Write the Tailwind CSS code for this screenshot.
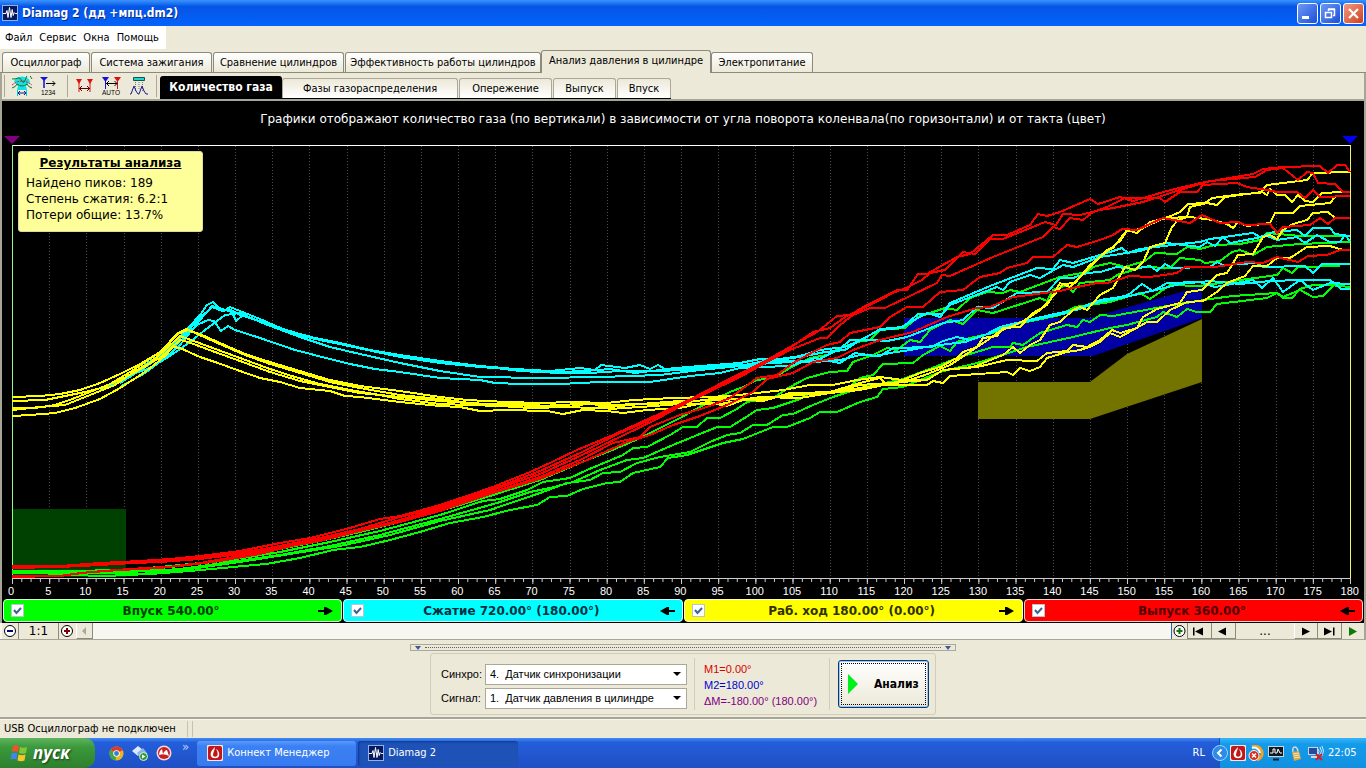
<!DOCTYPE html>
<html lang="ru">
<head>
<meta charset="utf-8">
<title>Diamag 2</title>
<script src="https://cdn.jsdelivr.net/npm/@tailwindcss/browser@4"></script>
</head>
<body class="flex h-screen flex-col overflow-hidden bg-[#ece9d8] font-['DejaVu_Sans_Condensed','DejaVu_Sans',sans-serif] text-[11px] leading-4 text-black">

<!-- Title bar -->
<header class="flex h-[26px] shrink-0 items-center gap-1 bg-linear-to-b from-[#3a93ff] via-[#0555e6] via-25% to-[#0463fb] pr-[2px] pl-0.5">
  <svg class="size-4 shrink-0" viewBox="0 0 16 16"><rect width="16" height="16" fill="#8fb0e8"/><rect x="1" y="1" width="14" height="14" fill="#06185e"/><path d="M1 8.500h3l1-3 1 7 1.500-10 1.500 10 1.200-8 1 6 1-3 1 1h2" fill="none" stroke="#fff"/></svg>
  <h1 class="flex-1 font-['DejaVu_Sans_Condensed',sans-serif] text-[12px] font-bold text-white [text-shadow:1px_1px_#0a2a8c]">Diamag 2 (дд +мпц.dm2)</h1>
  <div class="flex gap-0.5">
    <button aria-label="Свернуть" class="size-[21px] rounded-[3px] border border-white bg-linear-to-br from-[#6f98f5] to-[#1c4cd8]"><svg viewBox="0 0 19 19"><path d="M4 12h7v3H4z" fill="#fff"/></svg></button>
    <button aria-label="Восстановить" class="size-[21px] rounded-[3px] border border-white bg-linear-to-br from-[#6f98f5] to-[#1c4cd8]"><svg viewBox="0 0 19 19"><path d="M7.500 7V5.500h6v6H12M4.500 8.500h6v5h-6zM4 8.500h7M7 5h7" fill="none" stroke="#fff" stroke-width="1.500"/></svg></button>
    <button aria-label="Закрыть" class="size-[21px] rounded-[3px] border border-white bg-linear-to-br from-[#f09a80] to-[#d0391a]"><svg viewBox="0 0 19 19"><path d="M5 5l9 9M14 5l-9 9" stroke="#fff" stroke-width="2.200"/></svg></button>
  </div>
</header>

<!-- Menu -->
<nav class="flex h-[25px] shrink-0">
  <div class="flex h-[23px] w-[166px] items-center gap-[7px] bg-white pl-[5px]">
    <button>Файл</button><button>Сервис</button><button>Окна</button><button>Помощь</button>
  </div>
</nav>

<!-- Main tabs -->
<nav class="flex h-[22px] shrink-0 items-end border-b border-[#8b8a7c] pl-0.5 whitespace-nowrap">
  <button class="h-5 w-[88px] rounded-t-[3px] border border-b-0 border-[#8b8a7c] bg-linear-to-b from-white to-[#ece9d8]">Осциллограф</button>
  <button class="ml-px h-5 w-[121px] rounded-t-[3px] border border-b-0 border-[#8b8a7c] bg-linear-to-b from-white to-[#ece9d8]">Система зажигания</button>
  <button class="ml-px h-5 w-[131px] rounded-t-[3px] border border-b-0 border-[#8b8a7c] bg-linear-to-b from-white to-[#ece9d8]">Сравнение цилиндров</button>
  <button class="ml-px h-5 w-[196px] rounded-t-[3px] border border-b-0 border-[#8b8a7c] bg-linear-to-b from-white to-[#ece9d8]">Эффективность работы цилиндров</button>
  <button class="-mb-px h-[23px] w-[170px] rounded-t-[3px] border border-b-0 border-[#8b8a7c] bg-[#ece9d8] pb-0.5">Анализ давления в цилиндре</button>
  <button class="h-5 w-[102px] rounded-t-[3px] border border-b-0 border-[#8b8a7c] bg-linear-to-b from-white to-[#ece9d8]">Электропитание</button>
</nav>

<!-- Toolbar and chart tabs -->
<div class="flex h-[28px] shrink-0 border-x-2 border-b-2 border-[#a7a596] whitespace-nowrap">
  <div class="my-0.5 ml-0.5 flex items-center border-l border-[#aca899]">
    <button aria-label="Обзор фаз" class="ml-1.5 h-5 w-[22px]"><svg viewBox="0 0 22 20"><path d="M4 3q7-5 14 0l1 3-4 4 1 4H6l1-4-4-4z" fill="#16e0e6"/><path d="M1 3q4 0 6-1t4 3 4-3 6 1" fill="none" stroke="#0a7a28"/><path d="M1 9l3-2q7-4 14 0l3 2" fill="none" stroke="#d02020" stroke-dasharray="2 1"/><path d="M1 12q4-1 5-4 5 4 10 0 1 3 5 4" fill="none" stroke="#0a7a28"/><path d="M6.500 14v6M15.500 14v6" stroke="#0cc"/><path d="M7 17h8M9 15l-2 2 2 2M13 15l2 2-2 2" fill="none" stroke="#0a1c9c"/></svg></button>
    <button aria-label="Нумерация" class="ml-1.5 h-5 w-[22px]"><svg viewBox="0 0 22 20"><path d="M1 1h8L5 5z" fill="#1212d8"/><path d="M5 4v8" stroke="#1212d8" stroke-width="1.500"/><path d="M7 7.500h9M13.500 5l2.500 2.500-2.500 2.500" fill="none" stroke="#000"/><text x="2" y="19" font-family="Liberation Sans" font-size="6.500">1234</text></svg></button>
  </div>
  <div class="my-0.5 ml-1.5 flex items-center border-l border-[#aca899]">
    <button aria-label="Маркеры" class="ml-1.5 h-5 w-[22px]"><svg viewBox="0 0 22 20"><path d="M2 3h6L5 8zM13 3h6l-3 5z" fill="#e01010"/><path d="M5 6v10M16 6v10" stroke="#e01010"/><path d="M5 12.500h11M8 10l-2.500 2.500L8 15M13 10l2.500 2.500L13 15" fill="none" stroke="#600"/></svg></button>
    <button aria-label="Автомаркеры" class="ml-[5px] h-5 w-[22px]"><svg viewBox="0 0 22 20"><path d="M1 1h7L4.500 6z" fill="#1212d8"/><path d="M4.500 5v8" stroke="#1212d8"/><path d="M13 1h7l-3.500 5z" fill="#e01010"/><path d="M16.500 5v8" stroke="#e01010"/><path d="M5 7.500h11M8 5L5.500 7.500 8 10M13.500 5L16 7.500 13.500 10" fill="none" stroke="#000"/><text x="1" y="19" font-family="Liberation Sans" font-size="6.500">AUTO</text></svg></button>
    <button aria-label="Форма сигнала" class="ml-[5px] h-5 w-[22px]"><svg viewBox="0 0 22 20"><path d="M5.500 1.500h11v3h-11z" fill="#1cd6cf" stroke="#14524f"/><path d="M7.500 6v9M14.500 6v9M11 6v7" stroke="#777" stroke-dasharray="1 1"/><path d="M2 18h1l3-8 2 5 2 3h1l3-8 2 5 2 3h2" fill="none" stroke="#1b1b8c"/></svg></button>
    <span class="ml-1.5 h-[22px] border-l border-[#aca899]"></span>
  </div>
  <nav class="mt-[3px] ml-[3px] flex flex-1 items-end">
    <div class="flex items-end border-b border-black">
      <button class="h-[22px] w-[122px] rounded-t-[3px] bg-black text-[12px] font-bold text-white">Количество газа</button>
      <button class="h-5 w-[176px] rounded-t-[3px] border border-b-0 border-[#aca899] bg-linear-to-b from-[#ece9d8] to-white">Фазы газораспределения</button>
      <button class="ml-px h-5 w-[93px] rounded-t-[3px] border border-b-0 border-[#aca899] bg-linear-to-b from-[#ece9d8] to-white">Опережение</button>
      <button class="ml-px h-5 w-[63px] rounded-t-[3px] border border-b-0 border-[#aca899] bg-linear-to-b from-[#ece9d8] to-white">Выпуск</button>
      <button class="ml-px h-5 w-[54px] rounded-t-[3px] border border-b-0 border-[#aca899] bg-linear-to-b from-[#ece9d8] to-white">Впуск</button>
    </div>
  </nav>
</div>

<!-- Chart -->
<main class="relative flex min-h-0 flex-1 flex-col border-x-2 border-[#a7a596] bg-black font-['DejaVu_Sans',sans-serif] text-white">
  <p class="flex h-[35px] shrink-0 items-center justify-center text-[12px]">Графики отображают количество газа (по вертикали) в зависимости от угла поворота коленвала(по горизонтали) и от такта (цвет)</p>
  <svg class="min-h-0 w-full flex-1" viewBox="2 136 1362 448" preserveAspectRatio="none" role="img" aria-label="Количество газа по углу поворота коленвала">
    <path d="M4 136h16l-8 8z" fill="#80007f"/><path d="M1342 136h16l-8 8z" fill="#0000f5"/>
    <path d="M49.500 146V578M86.500 146V578M124.500 146V578M161.500 146V578M198.500 146V578M235.500 146V578M272.500 146V578M309.500 146V578M347.500 146V578M384.500 146V578M421.500 146V578M458.500 146V578M495.500 146V578M532.500 146V578M570.500 146V578M607.500 146V578M644.500 146V578M681.500 146V578M718.500 146V578M755.500 146V578M793.500 146V578M830.500 146V578M867.500 146V578M904.500 146V578M941.500 146V578M978.500 146V578M1016.500 146V578M1053.500 146V578M1090.500 146V578M1127.500 146V578M1164.500 146V578M1201.500 146V578M1239.500 146V578M1276.500 146V578M1313.500 146V578" stroke="#4c4c4c" stroke-dasharray="1 2"/>
    <path d="M13 509h113v68H13z" fill="#004000"/>
    <path d="M904 318H1090L1202 286V318L1093 356H904z" fill="#0000a4"/>
    <path d="M978 382H1090L1127 354 1202 319V382L1090 419H978z" fill="#737300"/>
    <path d="M12 145.500H1350" stroke="#fff"/><path d="M12.500 145V578" stroke="#90f890"/><path d="M1350.500 145V578" stroke="#f4f45c"/>
    <path d="M12 578.500H1351" stroke="#ccc"/>
    <path d="M12 580.500H1351" stroke="#ccc" stroke-width="3" stroke-dasharray="1 8.292"/>
    <path d="M12 581.500H1351" stroke="#ccc" stroke-width="5" stroke-dasharray="1 36.167"/>
    <g fill="none" stroke-width="2" stroke-linejoin="round" shape-rendering="crispEdges">
      <g stroke="#00ff00">
        <path d="M12 571L70 571 120 570 160 567 200 563 240 556 280 549 320 541 360 532 400 522 440 511 490 496 540 480 580 463 627 444 650 433 680 418 707 403 730 392 743 387 757 380 773 378 790 368 810 358 827 355 840 348 857 342 870 340 880 330 905 328 918 317 945 308 957 310 970 298 987 292 1003 293 1010 290 1020 292 1060 277 1087 272 1093 267 1110 263 1125 267 1145 261 1155 253 1177 254 1187 247 1200 249 1215 245 1240 244 1260 240 1267 233 1300 236 1350 236"/>
        <path d="M12 571L80 572 130 571 180 566 230 560 280 552 330 542 380 531 440 515 483 501 500 499 527 490 543 482 570 478 587 470 623 455 633 448 647 447 670 435 683 427 697 427 707 418 720 418 737 409 747 402 773 398 790 387 807 378 830 372 847 371 853 362 873 355 887 348 897 350 910 340 920 342 930 330 950 320 963 324 977 310 993 313 1040 298 1047 301 1053 290 1067 285 1073 292 1080 283 1110 280 1117 275 1143 267 1170 268 1180 258 1200 260 1205 263 1220 261 1232 252 1240 250 1253 255 1267 247 1300 244 1350 242"/>
        <path d="M12 572L80 573 130 572 180 569 230 562 280 555 330 546 380 535 440 519 497 503 530 492 550 488 573 482 600 470 627 460 643 458 673 445 717 427 730 427 743 419 757 410 773 408 800 399 810 393 833 393 850 387 860 378 873 375 883 364 913 363 923 355 940 346 950 351 957 342 970 338 993 333 1010 325 1027 322 1060 315 1075 307 1110 302 1120 299 1140 293 1150 299 1160 292 1170 285 1200 286 1233 281 1277 275 1283 268 1292 273 1298 267 1340 266"/>
        <path d="M12 573L90 573 140 574 190 569 240 562 290 554 340 546 390 535 440 521 490 510 540 493 567 483 590 480 603 473 620 472 637 463 660 457 690 452 710 442 727 435 740 433 753 425 767 425 783 415 793 414 813 405 833 397 860 388 900 380 927 370 960 357 993 347 1010 347 1013 343 1023 345 1040 333 1067 325 1077 327 1083 320 1090 322 1100 315 1113 316 1167 306 1210 299 1233 296 1277 293 1283 298 1292 298 1300 289 1313 285 1330 285 1350 287"/>
        <path d="M12 571L40 573 70 575 105 576 150 574 190 571 233 567 266 564 300 558 333 550 360 547 390 540 420 532 450 523 483 517 510 510 537 505 550 497 567 496 583 489 607 483 620 482 633 473 660 467 668 458 687 455 723 443 743 439 773 427 787 427 810 418 820 412 837 412 860 402 877 397 883 389 903 387 940 372 977 363 1027 347 1073 337 1110 328 1127 325 1157 317 1163 312 1177 317 1187 309 1197 312 1210 312 1217 304 1267 298 1277 293 1283 297 1300 290 1313 297 1323 296 1335 284 1350 284"/>
      </g>
      <g stroke="#00ffff">
        <path d="M100 390L130 375 160 355 175 343 188 328 200 315 207 305 213 302 217 306 224 311 230 307 240 311 260 319 285 330 310 337 340 343 370 350 400 355 440 361 480 366 515 369 550 371 580 368 595 370 601 365 625 368 640 365 650 369 658 365 665 369 700 366 740 363 760 359 780 359 800 356 820 350 845 347 865 338 880 329 903 327 918 314 942 314 950 303 990 286 1037 268 1053 269 1060 260 1073 263 1110 252 1122 248 1128 253 1140 249 1180 244 1200 242 1210 239 1253 233 1260 237 1273 232 1297 230 1305 236 1313 228 1330 228 1335 234 1350 236"/>
        <path d="M110 387L140 369 165 352 185 334 200 318 212 307 222 311 229 309 240 315 265 323 290 333 320 340 350 346 400 357 440 363 480 367 520 370 560 372 585 371 610 369 635 373 660 370 700 368 730 365 755 366 785 359 800 357 825 352 845 350 860 340 880 330 900 328 927 313 940 317 950 305 997 287 1003 290 1010 282 1030 275 1040 278 1063 265 1073 267 1100 257 1140 251 1167 243 1175 244 1200 247 1207 242 1215 246 1223 237 1230 243 1267 236 1277 240 1297 237 1305 243 1317 235 1330 242 1340 242 1345 235 1350 241"/>
        <path d="M120 387L145 373 165 358 180 345 200 320 212 306 232 312 236 321 243 315 270 325 300 334 330 342 400 357 440 361 480 366 520 371 560 373 590 373 620 371 660 371 700 369 740 366 770 363 795 362 815 361 840 349 850 340 873 340 887 341 907 337 943 323 963 320 977 307 993 308 1017 293 1047 292 1060 278 1073 278 1087 273 1100 272 1117 267 1133 269 1150 266 1157 271 1165 264 1172 268 1210 267 1217 262 1223 265 1257 263 1263 267 1305 266 1313 273 1322 264 1350 264"/>
        <path d="M130 375L150 368 170 356 190 342 205 330 225 315 240 313 265 324 300 337 330 347 360 354 400 363 440 371 480 377 540 378 600 377 660 375 700 370 740 366 765 361 790 361 815 362 840 360 860 355 880 356 893 348 932 347 943 341 957 337 970 340 993 332 1017 323 1047 317 1067 313 1087 305 1100 300 1120 297 1128 295 1142 284 1153 291 1167 283 1200 282 1215 287 1253 280 1262 288 1273 278 1283 292 1300 280 1313 290 1330 283 1350 284"/>
        <path d="M120 383L150 364 170 350 185 337 197 325 208 320 214 321 221 331 228 326 235 330 260 338 295 350 330 359 350 364 375 369 400 372 440 378 480 380 495 383 520 384 560 384 600 382 650 382 690 376 720 373 740 368 760 367 790 366 815 358 840 363 855 353 875 356 890 353 910 350 925 347 940 345 965 342 985 335 1000 327 1025 321 1050 315 1080 309 1095 303 1130 296 1160 289 1180 284 1210 281 1240 284 1270 281 1300 280 1330 280 1337 285 1341 289 1350 289"/>
      </g>
      <g stroke="#ffff00">
        <path d="M12 397L40 396 60 394 80 390 100 383 120 374 140 364 160 352 178 333 186 329 202 335 220 343 245 354 270 362 300 371 330 380 360 386 400 391 440 397 467 400 507 402 540 403 573 402 607 403 633 400 673 398 707 397 730 396 757 393 783 390 810 385 833 385 857 380 880 377 903 380 920 373 940 367 957 358 963 352 977 347 983 338 997 336 1003 328 1020 327 1033 313 1047 305 1060 283 1070 287 1090 267 1107 250 1113 248 1127 230 1137 233 1150 222 1167 218 1190 217 1213 220 1227 224 1233 228 1238 222 1247 226 1270 223 1275 213 1293 213 1300 206 1330 203 1335 197"/>
        <path d="M12 401L45 400 65 396 85 392 105 387 135 369 160 352 178 334 188 330 204 337 222 345 245 355 270 364 300 373 330 382 360 388 400 395 440 399 470 403 507 405 540 406 580 404 610 405 640 404 680 401 720 400 760 398 800 395 840 391 860 388 880 385 903 382 925 375 950 365 965 355 985 342 1000 331 1015 325 1025 320 1040 310 1050 300 1063 284 1075 283 1090 265 1110 249 1120 241 1127 231 1140 229 1160 220 1173 215 1180 212 1188 204 1205 203 1212 198 1243 194 1260 193 1267 185 1307 180 1313 173 1350 172"/>
        <path d="M12 408L35 408 55 405 75 398 100 388 120 380 145 367 165 350 180 336 210 347 240 358 270 369 295 377 320 384 350 390 380 395 400 399 440 404 470 405 500 406 530 408 570 407 590 403 610 409 640 407 680 404 720 404 760 397 800 398 830 393 860 385 890 383 927 380 943 370 973 367 1003 355 1013 347 1020 353 1030 345 1040 340 1050 325 1060 322 1073 310 1080 307 1087 310 1100 295 1113 288 1125 267 1135 270 1143 262 1150 247 1165 243 1172 227 1178 220 1187 217 1190 207 1207 203 1217 205 1225 197 1262 192 1267 195 1270 189 1277 195 1285 195 1292 202 1298 195 1305 201 1313 202 1322 193 1342 192"/>
        <path d="M12 410L40 407 65 405 90 395 115 385 135 371 160 358 180 340 188 342 215 352 240 361 270 372 300 381 330 387 360 393 400 397 440 401 480 404 520 404 560 407 600 408 640 404 680 403 720 398 763 401 790 393 820 394 860 390 893 383 903 380 927 380 943 370 977 367 1007 360 1037 361 1047 353 1067 351 1073 345 1087 347 1100 340 1112 330 1120 333 1137 328 1143 317 1157 309 1180 303 1187 292 1202 290 1217 275 1227 273 1238 255 1253 254 1263 237 1270 235 1277 239 1283 230 1293 224 1307 220 1313 213 1328 212 1335 218"/>
        <path d="M12 416L30 415 55 413 75 408 100 399 120 388 145 372 165 356 173 347 180 348 200 357 215 362 240 371 260 378 280 382 300 388 330 391 345 396 360 397 400 402 440 406 460 407 480 411 507 410 547 411 563 414 583 410 607 411 623 413 647 410 680 408 707 402 727 406 743 400 763 399 800 393 830 392 860 383 880 378 887 385 927 385 933 381 943 383 950 376 1007 372 1013 375 1020 368 1030 371 1040 367 1047 358 1067 352 1080 350 1090 347 1100 342 1110 333 1120 337 1133 330 1147 322 1157 322 1170 310 1187 302 1203 301 1217 292 1227 283 1245 276 1253 266 1267 266 1277 258 1290 258 1307 247 1330 246 1343 250"/>
      </g>
      <g stroke="#ff0000">
        <path d="M12 566L60 566 100 563 140 561 170 559 200 556 240 551 280 543 310 538 350 528 380 519 400 516 440 505 490 488 530 472 550 463 577 450 613 435 657 415 693 398 733 377 767 360 790 347 817 332 837 316 850 315 867 305 897 290 907 290 918 274 927 274 957 257 970 254 993 235 1007 235 1030 225 1038 214 1047 216 1060 212 1090 199 1098 204 1120 197 1133 201 1167 191 1200 183 1253 174 1263 169 1283 167 1320 166 1328 173 1337 165 1345 165 1350 172"/>
        <path d="M12 568L60 567 100 565 150 562 200 558 240 553 280 546 320 538 360 529 400 517 440 507 490 490 540 471 580 453 620 433 657 417 700 395 740 375 767 360 790 348 803 339 813 332 830 328 845 317 870 305 895 292 906 288 922 280 930 273 945 270 963 252 975 254 990 239 1003 239 1045 222 1056 225 1063 214 1080 215 1100 210 1113 208 1143 202 1180 190 1210 181 1255 177 1267 170 1283 168 1298 180 1307 172 1313 173 1318 183 1335 184 1343 192 1350 192"/>
        <path d="M12 576L60 576 80 573 120 570 160 568 200 563 240 556 280 548 320 541 360 531 400 520 440 508 490 491 540 474 580 456 620 437 657 419 690 401 740 377 767 362 790 350 820 338 827 338 840 325 853 315 870 308 885 308 937 283 942 275 950 276 993 257 1043 237 1053 227 1060 229 1070 218 1083 220 1093 212 1107 207 1125 198 1160 198 1165 202 1180 192 1197 192 1203 185 1237 183 1247 187 1267 190 1277 192 1297 192 1305 198 1313 190 1320 197 1350 196"/>
        <path d="M12 577L60 576 90 572 130 569 180 566 220 561 260 554 300 544 350 532 400 521 440 510 490 493 540 477 580 460 613 443 640 437 650 427 680 415 707 407 730 398 757 378 777 375 793 363 813 352 827 345 840 342 850 333 880 327 890 317 907 307 923 307 940 292 963 290 980 277 1000 273 1007 268 1027 263 1033 257 1053 257 1067 245 1077 247 1100 240 1113 235 1122 229 1137 230 1163 218 1190 223 1202 215 1220 223 1238 222 1245 225 1270 224 1277 233 1283 227 1310 225 1320 218 1328 224 1335 218 1350 218"/>
        <path d="M12 567L60 566 110 564 160 562 200 559 250 553 300 543 350 533 400 522 440 511 490 494 540 479 562 470 585 461 627 442 650 435 673 425 700 416 727 405 753 392 767 379 793 373 813 362 837 358 853 350 880 340 913 332 947 317 977 308 990 307 1013 297 1060 291 1077 287 1097 283 1107 283 1130 276 1150 277 1177 273 1185 267 1215 267 1247 262 1263 263 1277 257 1298 262 1308 256 1327 255 1340 250 1350 250"/>
      </g>
    </g>
  </svg>
  <div class="mr-[14px] ml-[9px] flex h-[15px] shrink-0 justify-between font-['Liberation_Sans',sans-serif] text-[11px] leading-[15px]">
    <span class="flex w-0 justify-center">0</span><span class="flex w-0 justify-center">5</span><span class="flex w-0 justify-center">10</span><span class="flex w-0 justify-center">15</span><span class="flex w-0 justify-center">20</span><span class="flex w-0 justify-center">25</span><span class="flex w-0 justify-center">30</span><span class="flex w-0 justify-center">35</span><span class="flex w-0 justify-center">40</span><span class="flex w-0 justify-center">45</span><span class="flex w-0 justify-center">50</span><span class="flex w-0 justify-center">55</span><span class="flex w-0 justify-center">60</span><span class="flex w-0 justify-center">65</span><span class="flex w-0 justify-center">70</span><span class="flex w-0 justify-center">75</span><span class="flex w-0 justify-center">80</span><span class="flex w-0 justify-center">85</span><span class="flex w-0 justify-center">90</span><span class="flex w-0 justify-center">95</span><span class="flex w-0 justify-center">100</span><span class="flex w-0 justify-center">105</span><span class="flex w-0 justify-center">110</span><span class="flex w-0 justify-center">115</span><span class="flex w-0 justify-center">120</span><span class="flex w-0 justify-center">125</span><span class="flex w-0 justify-center">130</span><span class="flex w-0 justify-center">135</span><span class="flex w-0 justify-center">140</span><span class="flex w-0 justify-center">145</span><span class="flex w-0 justify-center">150</span><span class="flex w-0 justify-center">155</span><span class="flex w-0 justify-center">160</span><span class="flex w-0 justify-center">165</span><span class="flex w-0 justify-center">170</span><span class="flex w-0 justify-center">175</span><span class="flex w-0 justify-center">180</span>
  </div>
  <aside class="absolute top-[50px] left-4 h-[81px] w-[185px] rounded-[3px] border border-[#dcdc9c] bg-[#ffff99] px-[7px] pt-[3px] text-[12px] leading-4 text-black">
    <h2 class="mb-1 text-center font-bold underline">Результаты анализа</h2>
    <p>Найдено пиков: 189</p><p>Степень сжатия: 6.2:1</p><p>Потери общие: 13.7%</p>
  </aside>
</main>

<!-- Stroke legend -->
<div class="grid h-6 shrink-0 grid-cols-4 gap-px border-x-2 border-[#a7a596] bg-black pr-px pb-px pl-px font-['DejaVu_Sans',sans-serif] text-[12px] font-bold">
  <label class="flex items-center rounded-[4px] border border-[#d8ffd8] bg-[#00ff00] px-[7px]"><span class="grid size-[13px]"><input type="checkbox" checked class="col-start-1 row-start-1 size-[13px] appearance-none border border-[#b8c4d4] bg-white"><svg class="pointer-events-none col-start-1 row-start-1" viewBox="0 0 13 13"><path d="M3 6l2.500 3L10 4" fill="none" stroke="#3d6298" stroke-width="2"/></svg></span><span class="flex-1 text-center text-[#003c00]">Впуск 540.00°</span><svg class="h-2.5 w-4" viewBox="0 0 16 10"><path d="M0 4h6V1h2l7 4-7 4H6V6H0z"/></svg></label>
  <label class="flex items-center rounded-[4px] border border-[#d8ffff] bg-[#00ffff] px-[7px]"><span class="grid size-[13px]"><input type="checkbox" checked class="col-start-1 row-start-1 size-[13px] appearance-none border border-[#b8c4d4] bg-white"><svg class="pointer-events-none col-start-1 row-start-1" viewBox="0 0 13 13"><path d="M3 6l2.500 3L10 4" fill="none" stroke="#3d6298" stroke-width="2"/></svg></span><span class="flex-1 text-center text-[#003040]">Сжатие 720.00° (180.00°)</span><svg class="h-2.5 w-4" viewBox="0 0 16 10"><path d="M16 4h-6V1H8L1 5l7 4h2V6h6z"/></svg></label>
  <label class="flex items-center rounded-[4px] border border-[#ffffd0] bg-[#ffff00] px-[7px]"><span class="grid size-[13px]"><input type="checkbox" checked class="col-start-1 row-start-1 size-[13px] appearance-none border border-[#b8c4d4] bg-white"><svg class="pointer-events-none col-start-1 row-start-1" viewBox="0 0 13 13"><path d="M3 6l2.500 3L10 4" fill="none" stroke="#3d6298" stroke-width="2"/></svg></span><span class="flex-1 text-center text-[#303000]">Раб. ход 180.00° (0.00°)</span><svg class="h-2.5 w-4" viewBox="0 0 16 10"><path d="M0 4h6V1h2l7 4-7 4H6V6H0z"/></svg></label>
  <label class="flex items-center rounded-[4px] border border-[#ffd0d0] bg-[#ff0000] px-[7px]"><span class="grid size-[13px]"><input type="checkbox" checked class="col-start-1 row-start-1 size-[13px] appearance-none border border-[#b8c4d4] bg-white"><svg class="pointer-events-none col-start-1 row-start-1" viewBox="0 0 13 13"><path d="M3 6l2.500 3L10 4" fill="none" stroke="#3d6298" stroke-width="2"/></svg></span><span class="flex-1 text-center text-[#500000]">Выпуск 360.00°</span><svg class="h-2.5 w-4" viewBox="0 0 16 10"><path d="M16 4h-6V1H8L1 5l7 4h2V6h6z"/></svg></label>
</div>

<!-- Zoom and playback row -->
<div class="flex h-[17px] shrink-0 border-r-2 border-b border-[#a7a596] bg-[#f7f6f0] pl-0.5">
  <button aria-label="Уменьшить" class="w-[17px] border-r border-[#8b8a7c] bg-[#ece9d8]"><svg class="h-4 w-4" viewBox="0 0 16 16"><circle cx="8" cy="8" r="5.500" fill="#fff" stroke="#000"/><path d="M5 8h6" stroke="#00007a" stroke-width="2"/></svg></button>
  <button class="w-10 border-r border-[#8b8a7c] bg-[#ece9d8] font-['DejaVu_Sans',sans-serif] text-[12px]">1:1</button>
  <button aria-label="Увеличить" class="w-[17px] bg-[#ece9d8]"><svg class="h-4 w-4" viewBox="0 0 16 16"><circle cx="8" cy="8" r="5.500" fill="#fff" stroke="#000"/><path d="M5 8h6M8 5v6" stroke="#7a0000" stroke-width="2"/></svg></button>
  <button aria-label="Влево" class="w-[17px] border-r border-b border-l border-[#8b8a7c] border-l-white bg-[#ece9d8]"><svg class="h-4 w-4" viewBox="0 0 16 16"><path d="M9 4v8L5 8z" fill="#aca899"/></svg></button>
  <div class="flex-1"></div>
  <button aria-label="Добавить" class="w-[17px] border-r border-l border-r-[#8b8a7c] border-l-[#2866b8] bg-[#ece9d8]"><svg class="h-4 w-4" viewBox="0 0 16 16"><circle cx="7.500" cy="8" r="5.500" fill="#fff" stroke="#000"/><path d="M4.500 8h6M7.500 5v6" stroke="#0a7a0a" stroke-width="2"/></svg></button>
  <button aria-label="В начало" class="w-6 border-r border-b border-[#8b8a7c] bg-[#ece9d8]"><svg class="h-4 w-[22px]" viewBox="0 0 22 16"><path d="M5 4.500h1.500v8H5zM15 4.500v8L7 8.500z"/></svg></button>
  <button aria-label="Назад" class="w-6 border-r border-b border-[#8b8a7c] bg-[#ece9d8]"><svg class="h-4 w-[22px]" viewBox="0 0 22 16"><path d="M14 4.500v8L6 8.500z"/></svg></button>
  <button class="w-[58px] bg-[#ece9d8] font-['DejaVu_Sans',sans-serif] text-[12px]">...</button>
  <button aria-label="Вперёд" class="w-6 border-r border-b border-l border-[#8b8a7c] border-l-white bg-[#ece9d8]"><svg class="h-4 w-[22px]" viewBox="0 0 22 16"><path d="M7 4.500v8l8-4z"/></svg></button>
  <button aria-label="В конец" class="w-6 border-r border-b border-[#8b8a7c] bg-[#ece9d8]"><svg class="h-4 w-[22px]" viewBox="0 0 22 16"><path d="M15 4.500h1.500v8H15zM6 4.500v8l8-4z"/></svg></button>
  <button aria-label="Воспроизвести" class="w-[22px] bg-[#ece9d8]"><svg class="h-4 w-[22px]" viewBox="0 0 22 16"><path d="M7 4v9l8-4.500z" fill="#0a7a0a"/></svg></button>
</div>

<!-- Controls -->
<section class="flex h-[79px] shrink-0 flex-col items-center border-b-2 border-[#a7a596] pt-1 font-['Liberation_Sans',sans-serif] text-[11px]">
  <div class="flex h-[7px] w-[546px] items-center gap-1 border border-[#aca899] px-1">
    <svg class="h-1 w-1.5" viewBox="0 0 6 4"><path d="M0 0h6L3 4z" fill="#3a5a9c"/></svg><span class="flex-1 border-t border-dotted border-[#55606c]"></span><svg class="h-1 w-1.5" viewBox="0 0 6 4"><path d="M0 0h6L3 4z" fill="#3a5a9c"/></svg>
  </div>
  <div class="mt-0.5 flex h-[62px] w-[506px] items-center rounded-[3px] border border-[#d0cdbb] pl-2.5">
    <div class="mt-1 grid w-[246px] grid-cols-[44px_202px] items-center gap-y-[3px]">
      <label for="sync">Синхро:</label>
      <span class="grid"><select id="sync" class="col-start-1 row-start-1 h-[21px] appearance-none border border-[#aca899] bg-white pl-1"><option>4.&nbsp; Датчик синхронизации</option></select><svg class="pointer-events-none col-start-1 row-start-1 mr-1.5 h-1 w-2 self-center justify-self-end" viewBox="0 0 8 4"><path d="M0 0h8L4 4z"/></svg></span>
      <label for="signal">Сигнал:</label>
      <span class="grid"><select id="signal" class="col-start-1 row-start-1 h-[21px] appearance-none border border-[#aca899] bg-white pl-1"><option>1.&nbsp; Датчик давления в цилиндре</option></select><svg class="pointer-events-none col-start-1 row-start-1 mr-1.5 h-1 w-2 self-center justify-self-end" viewBox="0 0 8 4"><path d="M0 0h8L4 4z"/></svg></span>
    </div>
    <div class="ml-[7px] h-[52px] w-[136px] border-x border-[#d0cdbb] pt-[3px] pl-[9px] whitespace-nowrap">
      <p class="text-[#d80000]">M1=0.00°</p><p class="text-[#0000d0]">M2=180.00°</p><p class="text-[#80007f]">ΔM=-180.00° (180.00°)</p>
    </div>
    <button class="ml-2 flex h-12 w-[91px] items-center rounded-[3px] border border-[#003c74] bg-linear-to-b from-white to-[#ece9d8] p-0.5 shadow-[inset_0_0_0_1px_#a9c4ec]"><span class="flex size-full items-center gap-4 border border-dotted border-black pl-1.5 font-['DejaVu_Sans_Condensed',sans-serif] text-[12px] font-bold"><svg class="h-5 w-2.5" viewBox="0 0 10 20"><path d="M0 0l10 10L0 20z" fill="#00f01c"/></svg>Анализ</span></button>
  </div>
</section>

<!-- Status bar -->
<footer class="flex h-[19px] shrink-0 items-center border-t border-[#f8f7f0]">
  <p class="w-[188px] border-r border-[#c5c2b0] pl-1">USB Осциллограф не подключен</p><span class="ml-1 h-4 border-l border-[#c5c2b0]"></span>
</footer>

<!-- Taskbar -->
<div class="flex h-[30px] shrink-0 items-stretch bg-linear-to-b from-[#3f8cf3] via-[#245edb] via-15% to-[#1f4fc4] text-white">
  <button class="flex w-[95px] items-center gap-1 rounded-r-[10px] bg-linear-to-b from-[#5fb45f] via-[#3b9a3b] via-30% to-[#2d7f2d] pl-2.5 font-['Open_Sans',sans-serif] text-[17px] font-bold italic [text-shadow:1px_1px_2px_#143c14]">
    <svg class="h-[18px] w-[19px]" viewBox="0 0 19 18"><path d="M3 2q3-2 6 0L8 8Q5 6.500 2 8z" fill="#f0532a"/><path d="M10 3q4 1.500 7 0l-1 6q-3 1.500-7 0z" fill="#82c836"/><path d="M1.500 9.500q3-1.500 6 0l-1 6q-3-1.500-6 0z" fill="#3f86f2"/><path d="M8.500 10.500q4 1.500 7 0l-1 6q-3 1.500-7 0z" fill="#fbc52c"/></svg>пуск</button>
  <div class="ml-3.5 flex items-center gap-2">
    <button aria-label="Chrome"><svg class="size-[15px]" viewBox="0 0 16 16"><circle cx="8" cy="8" r="7.500" fill="#e8b820"/><path d="M8 8L1.500 4.200A7.500 7.500 0 0 1 14.500 4.500z" fill="#db3b2b"/><path d="M8 8L1.500 4.200A7.500 7.500 0 0 0 7 15.500z" fill="#3da64a"/><circle cx="8" cy="8" r="3.500" fill="#fff"/><circle cx="8" cy="8" r="2.600" fill="#3b79d8"/></svg></button>
    <button aria-label="Медиа"><svg class="size-4" viewBox="0 0 16 16"><path d="M0 6l6-5 5 4-5 6z" fill="#dceafc"/><path d="M5 8l6-5 4 5-5 6z" fill="#86b4ec"/><circle cx="11.500" cy="11.500" r="4" fill="#2f9a38" stroke="#d8f0d8"/><path d="M10 9.500v4l3.500-2z" fill="#fff"/></svg></button>
    <button aria-label="Nero"><svg class="size-4" viewBox="0 0 16 16"><circle cx="8" cy="8" r="7.500" fill="#f6dada"/><circle cx="8" cy="8" r="6" fill="#c82020"/><path d="M3 10q0-4 3-6l1 5q2-4 4-4l2 6q-5-3-10-1z" fill="#fff"/></svg></button>
    <button class="ml-0.5 mb-3 text-[13px] leading-3 text-[#b8d0ff]">»</button>
  </div>
  <div class="ml-2 flex items-center gap-0.5">
    <button class="flex h-[25px] w-[159px] items-center gap-1 rounded-[3px] bg-linear-to-b from-[#5a9bff] via-[#3c81f3] via-20% to-[#377af0] pl-2.5"><svg class="size-4" viewBox="0 0 16 16"><rect width="16" height="16" rx="1" fill="#f4e4e4"/><rect x="1" y="1" width="14" height="14" rx="2" fill="#c01818"/><path d="M8 2C4 6 3 8 4 11c1 3 7 3 8 0 1-3-1-6-3-7 2 3 2 6 1 7-1 1-4 1-4-1 0-3 2-5 2-8z" fill="#fff"/></svg>Коннект Менеджер</button>
    <button class="flex h-[25px] w-[160px] items-center gap-1 rounded-[3px] bg-[#1e52b7] pl-2.5 shadow-[inset_1px_1px_2px_#123a8c]"><svg class="size-4" viewBox="0 0 16 16"><rect width="16" height="16" fill="#8fb0e8"/><rect x="1" y="1" width="14" height="14" fill="#06185e"/><path d="M1 8.500h3l1-3 1 7 1.500-10 1.500 10 1.200-8 1 6 1-3 1 1h2" fill="none" stroke="#fff"/></svg>Diamag 2</button>
  </div>
  <div class="flex flex-1 items-center justify-end pr-3.5">RL</div>
  <div class="relative flex w-[147px] items-center gap-0.5 border-l border-[#1c4fb0] bg-linear-to-b from-[#35b6fa] via-[#139bea] via-20% to-[#1290e0] pl-2.5">
    <button aria-label="Скрытые значки" class="absolute -left-2 size-4 rounded-full border border-[#9fd0ff] bg-[#2f8ae8]"><svg viewBox="0 0 14 14"><path d="M8.500 3.500L5 7l3.500 3.500" fill="none" stroke="#fff" stroke-width="2"/></svg></button>
    <svg class="size-4" viewBox="0 0 16 16"><rect width="16" height="16" rx="1" fill="#f4e4e4"/><rect x="1" y="1" width="14" height="14" rx="2" fill="#c01818"/><path d="M8 2C4 6 3 8 4 11c1 3 7 3 8 0 1-3-1-6-3-7 2 3 2 6 1 7-1 1-4 1-4-1 0-3 2-5 2-8z" fill="#fff"/></svg>
    <svg class="size-4" viewBox="0 0 16 16"><path d="M4 2a7 7 0 1 1 5 13" fill="none" stroke="#f4a21c" stroke-width="3"/><path d="M4 3a6 6 0 0 1 8 5" fill="none" stroke="#fff" stroke-width="2"/><circle cx="6" cy="10.500" r="5" fill="#d8301c" stroke="#fff"/><path d="M4 8.500l4 4M8 8.500l-4 4" stroke="#fff" stroke-width="1.500"/></svg>
    <svg class="ml-0.5 size-4" viewBox="0 0 16 16"><rect x=".5" y="1.500" width="15" height="10" fill="#101820" stroke="#c8d4e0"/><path d="M5 14.500h6" stroke="#101820" stroke-width="2"/><path d="M2 8h3V4h2v4h2l1-4 2 4h2" fill="none" stroke="#fff"/></svg>
    <svg class="ml-0.5 size-4" viewBox="0 0 16 16"><path d="M5 7q-1-5 2-5 2 0 3 4" fill="none" stroke="#d8d8d8" stroke-width="1.500"/><path d="M4 7l7-1 2 8-7 2z" fill="#d8a840"/><path d="M5 9l6-1M5.500 11l6-1M6 13l6-1" stroke="#f4e8c8"/></svg>
    <svg class="ml-0.5 size-4" viewBox="0 0 16 16"><rect x=".5" y="2.500" width="9" height="7" fill="#294a9c" stroke="#c8d4e8"/><path d="M3 12h6" stroke="#d8d8d8" stroke-width="2"/><path d="M10 4q2 2 0 5M12 2q3 4 0 8M14 1q3 5 0 10" fill="none" stroke="#cfe4f8"/><path d="M8 9l6 6M14 9l-6 6" stroke="#d82020" stroke-width="2"/></svg>
    <time class="ml-0.5">22:05</time>
  </div>
</div>
</body>
</html>
